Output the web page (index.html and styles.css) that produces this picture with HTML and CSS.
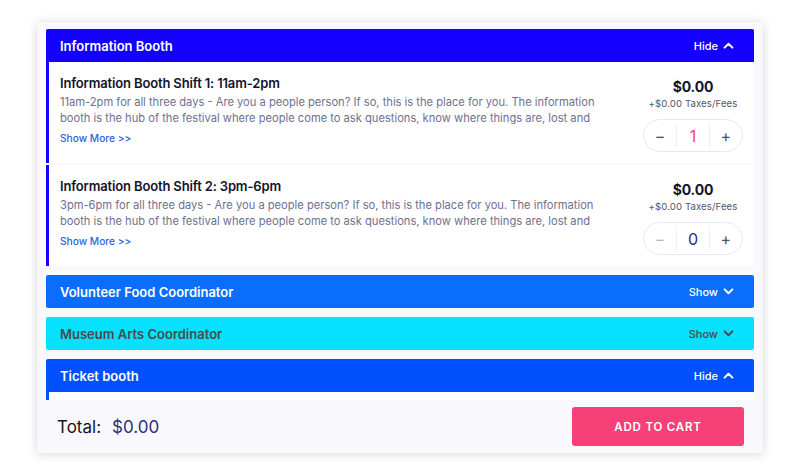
FILE: index.html
```html
<!DOCTYPE html>
<html>
<head>
<meta charset="utf-8">
<link rel="stylesheet" href="styles.css">
</head>
<body>
<div class="card">
  <div class="list">
    <section class="section">
      <div class="head head-blue1">
        <span class="head-title">Information Booth</span>
        <span class="toggle">Hide <svg class="chev" viewBox="0 0 12 8" width="11" height="7"><path d="M1.5 6.5 L6 2 L10.5 6.5" /></svg></span>
      </div>
      <div class="item">
        <div class="info">
          <div class="title">Information Booth Shift 1: 11am-2pm</div>
          <div class="desc"><span class="line">11am-2pm for all three days - Are you a people person? If so, this is the place for you. The information</span><span class="line">booth is the hub of the festival where people come to ask questions, know where things are, lost and</span></div>
          <a class="more">Show More &gt;&gt;</a>
        </div>
        <div class="buy">
          <div class="price">$0.00</div>
          <div class="fees">+$0.00 Taxes/Fees</div>
          <div class="stepper">
            <span class="step minus">&minus;</span>
            <span class="qty qty-on">1</span>
            <span class="step plus">+</span>
          </div>
        </div>
      </div>
      <div class="item">
        <div class="info">
          <div class="title">Information Booth Shift 2: 3pm-6pm</div>
          <div class="desc"><span class="line">3pm-6pm for all three days - Are you a people person? If so, this is the place for you. The information</span><span class="line">booth is the hub of the festival where people come to ask questions, know where things are, lost and</span></div>
          <a class="more">Show More &gt;&gt;</a>
        </div>
        <div class="buy">
          <div class="price">$0.00</div>
          <div class="fees">+$0.00 Taxes/Fees</div>
          <div class="stepper">
            <span class="step minus minus-off">&minus;</span>
            <span class="qty">0</span>
            <span class="step plus">+</span>
          </div>
        </div>
      </div>
    </section>
    <section class="section">
      <div class="head head-blue2">
        <span class="head-title">Volunteer Food Coordinator</span>
        <span class="toggle">Show <svg class="chev" viewBox="0 0 12 8" width="11" height="7"><path d="M1.5 1.5 L6 6 L10.5 1.5" /></svg></span>
      </div>
    </section>
    <section class="section">
      <div class="head head-cyan">
        <span class="head-title">Museum Arts Coordinator</span>
        <span class="toggle">Show <svg class="chev" viewBox="0 0 12 8" width="11" height="7"><path d="M1.5 1.5 L6 6 L10.5 1.5" /></svg></span>
      </div>
    </section>
    <section class="section">
      <div class="head head-blue3">
        <span class="head-title">Ticket booth</span>
        <span class="toggle">Hide <svg class="chev" viewBox="0 0 12 8" width="11" height="7"><path d="M1.5 6.5 L6 2 L10.5 6.5" /></svg></span>
      </div>
      <div class="item item-stub"></div>
    </section>
  </div>
  <div class="footer">
    <div class="total"><span class="total-label">Total:</span><span class="total-value">$0.00</span></div>
    <button class="cart">ADD TO CART</button>
  </div>
</div>
</body>
</html>
```
FILE: styles.css
```css
* { box-sizing: border-box; }
html, body { margin: 0; padding: 0; background: #ffffff; }
body {
  font-family: "Inter", "Open Sans", sans-serif;
  width: 800px;
  height: 475px;
  overflow: hidden;
  padding: 22px 0 0 37px;
}
.card {
  width: 726px;
  height: 431px;
  background: #f8f8fd;
  box-shadow: 0 1px 10px rgba(0, 0, 0, 0.16);
  display: flex;
  flex-direction: column;
  padding: 7px 9px 0 9px;
}
.list {
  height: 371px;
  overflow: hidden;
  flex: none;
}
.section { margin-bottom: 9px; }
.head {
  height: 33px;
  display: flex;
  align-items: center;
  justify-content: space-between;
  padding: 0 20px 0 14px;
  color: #ffffff;
  border-radius: 2px 2px 0 0;
}
.head-title {
  font-size: 13px;
  font-weight: 600;
  letter-spacing: 0;
}
.toggle {
  font-size: 11px;
  font-weight: 500;
  display: flex;
  align-items: center;
  gap: 5px;
}
.chev path {
  fill: none;
  stroke: currentColor;
  stroke-width: 2.2;
  stroke-linecap: round;
  stroke-linejoin: round;
}
.head-blue1 { background: #1400fd; }
.head-blue2 { background: #0a6dfd; border-radius: 2px; }
.head-cyan { background: #05e1fe; color: #4a4a4a; border-radius: 2px; }
.head-blue3 { background: #0050fe; }
.item {
  background: #ffffff;
  border-left: 3px solid #1400fd;
  display: flex;
  justify-content: space-between;
  align-items: flex-start;
  padding: 11px 11px 11px 11px;
  margin-bottom: 2px;
}
.item:last-child { margin-bottom: 0; }
.item-stub { height: 30px; border-left-color: #0050fe; }
.info { width: 560px; padding-bottom: 7px; }
.title {
  font-size: 13px;
  font-weight: 600;
  line-height: 20px;
  letter-spacing: -0.15px;
  color: #14142b;
}
.desc {
  margin-top: 1px;
  font-size: 11.15px;
  line-height: 16px;
  color: #6f6f8f;
  height: 32px;
  overflow: hidden;
}
.line {
  display: block;
  white-space: nowrap;
}
.more {
  display: block;
  margin-top: 5px;
  font-size: 10.2px;
  line-height: 14px;
  color: #2f5fe3;
  font-weight: 500;
}
.buy {
  width: 100px;
  display: flex;
  flex-direction: column;
  align-items: center;
  padding-top: 4px;
}
.price {
  font-size: 14px;
  font-weight: 700;
  line-height: 20px;
  letter-spacing: -0.2px;
  color: #14142b;
}
.fees {
  font-size: 9.6px;
  line-height: 14px;
  color: #55556b;
  letter-spacing: 0.1px;
  white-space: nowrap;
}
.stepper {
  margin-top: 8px;
  width: 100px;
  height: 33px;
  border: 1px solid #e8e8f0;
  border-radius: 17px;
  background: #ffffff;
  display: flex;
  align-items: center;
}
.step {
  width: 33px;
  text-align: center;
  font-size: 16px;
  color: #505068;
}
.minus-off { color: #b8b8c8; }
.qty {
  width: 34px;
  height: 24px;
  line-height: 24px;
  text-align: center;
  font-size: 16px;
  color: #2b2d72;
  border-left: 1px solid #eeeef3;
  border-right: 1px solid #eeeef3;
}
.qty-on { color: #f2427a; }
.footer {
  flex: 1;
  display: flex;
  align-items: center;
  justify-content: space-between;
  padding: 0 10px 0 11px;
}
.total {
  font-size: 17px;
  display: flex;
  gap: 11px;
}
.total-label { color: #161616; }
.total-value { color: #2d2f7a; }
.cart {
  width: 172px;
  height: 39px;
  border: none;
  border-radius: 3px;
  background: #f54078;
  color: #ffffff;
  font-family: "Inter", sans-serif;
  font-size: 11.5px;
  font-weight: 600;
  letter-spacing: 0.8px;
}
```
